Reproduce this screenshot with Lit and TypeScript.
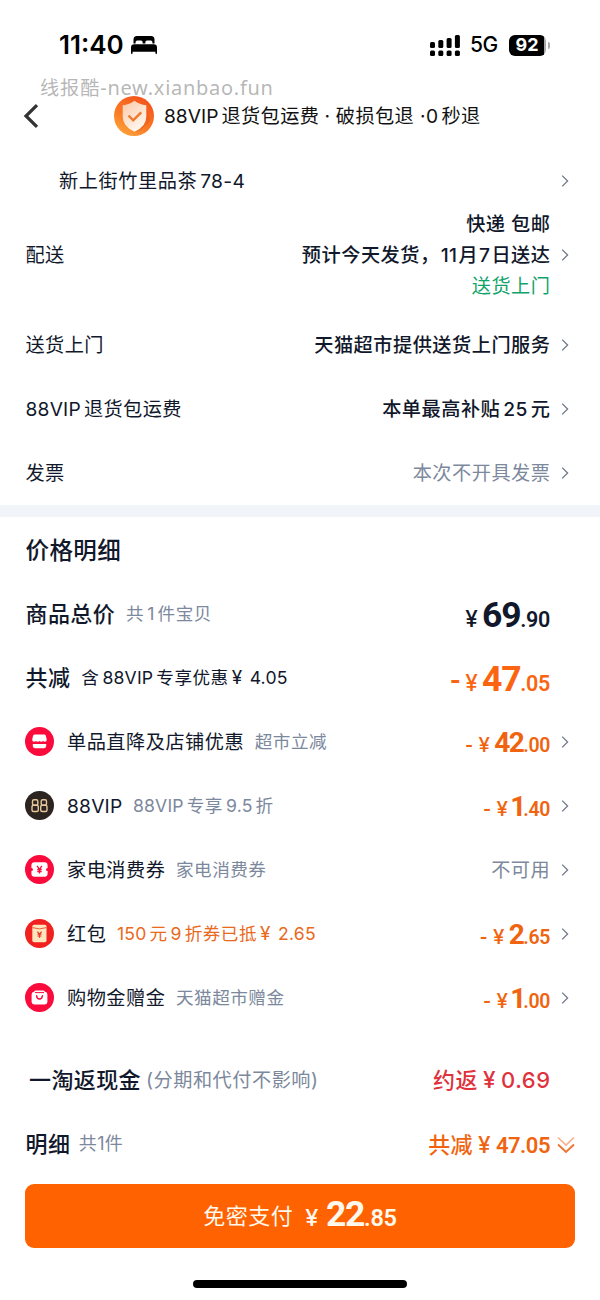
import { LitElement, html, css, svg, nothing } from "lit";
import { customElement, property } from "lit/decorators.js";

const RUNS = /([A-Za-z0-9][A-Za-z0-9.\-]*|¥ )/;

/* Wraps Latin runs so they get a little air next to Chinese characters. */
const mixed = (s: string) =>
  s.split(RUNS).map((part, i, all) =>
    i % 2
      ? part === "¥ "
        ? html`<span class="cur">¥</span>`
        : html`<span class="lat ${all[i - 1] ? "gl" : ""} ${all[i + 1] ? "gr" : ""}">${part}</span>`
      : part
  );

const chevron = html`<svg class="chev" width="8" height="14" viewBox="0 0 8 14">
  <path d="M1.2 1.6 L6.6 7 L1.2 12.4" fill="none" stroke="#6f7887" stroke-width="1.3" /></svg>`;

const icons: Record<string, unknown> = {
  shop: svg`<circle cx="14.5" cy="14.5" r="14.5" fill="#fb0a3c"/>
    <path d="M9.800 7.500h9.400q1.300 0 1.600 1.200l.9 3.600q.2 2.500-1.900 2.500-1.200 0-1.800-.8-.7.8-1.800.8t-1.700-.8q-.7.8-1.800.8t-1.800-.8q-.6.8-1.800.8-2.100 0-1.900-2.500l.9-3.600q.3-1.200 1.700-1.200z" fill="#fff"/>
    <path d="M7.800 16.900h13.400v2.200q0 2.100-2.100 2.100h-9.200q-2.100 0-2.100-2.100z" fill="#fff"/>`,
  vip: svg`<circle cx="14.5" cy="14.5" r="14.5" fill="#2b2420"/>
    <g fill="none" stroke="#e9c79c" stroke-width="1.400">
    <rect x="7.500" y="8.700" width="5.300" height="5.600" rx="1.500"/><rect x="7" y="14.300" width="6.300" height="6.200" rx="1.500"/>
    <rect x="16.200" y="8.700" width="5.300" height="5.600" rx="1.500"/><rect x="15.700" y="14.300" width="6.300" height="6.200" rx="1.500"/></g>`,
  coupon: svg`<circle cx="14.5" cy="14.5" r="14.5" fill="#fb0a3c"/>
    <path d="M9.600 7.300h9.800q3.200 0 3.200 3.200v2.400a1.600 1.600 0 0 0 0 3.200v2.400q0 3.200-3.200 3.200H9.600q-3.200 0-3.200-3.200v-2.400a1.600 1.600 0 0 0 0-3.200v-2.400q0-3.200 3.200-3.200z" fill="#fff"/>
    <path d="M12.100 10.900l2.400 3.400 2.400-3.400M14.500 14.300v4.300M12.300 14.500h4.400M12.300 16.500h4.400" fill="none" stroke="#fb0a3c" stroke-width="1.300"/>`,
  packet: svg`<circle cx="14.5" cy="14.5" r="14.5" fill="#f0211f"/>
    <rect x="7.300" y="5.800" width="14.200" height="17.400" rx="1.800" fill="#fde5bd"/>
    <path d="M7.300 8.600q7.100 2.600 14.200 0" fill="none" stroke="#ee5a3a" stroke-width="1"/>
    <path d="M12.400 12.600l2.100 2.500 2.100-2.500M14.500 15v3.800M12.500 15.100h4M12.500 17h4" fill="none" stroke="#e8392b" stroke-width="1.200"/>`,
  bag: svg`<circle cx="14.5" cy="14.5" r="14.5" fill="#fb0a3c"/>
    <path d="M11 7.400h7q1.600 0 1.900 1.300 2.500.3 2.500 2.700v7.200q0 3-3 3H9.600q-3 0-3-3v-7.200q0-2.400 2.500-2.700.3-1.300 1.900-1.300z" fill="#fff"/>
    <path d="M10 9.600h9" stroke="#fb0a3c" stroke-width="1"/>
    <path d="M11.600 12.700q.3 3.300 2.900 3.300t2.900-3.300" fill="none" stroke="#fb0a3c" stroke-width="1.400" stroke-linecap="round"/>`,
};

const base = css`
  .lat { letter-spacing: 0.200px; }
  .gl { margin-left: 3px; }
  .gr { margin-right: 3px; }
  .cur { font-size: 1.080em; margin: 0 7px 0 3px; line-height: 1; }
  .chev { display: block; flex: none; width: 8px; height: 14px; margin-top: -1px; }
`;

@customElement("pay-price")
export class PayPrice extends LitElement {
  @property() value = "0.00";
  @property({ type: Boolean }) minus = false;
  @property() size = "m";
  static styles = css`
    :host { display: block; font-family: Roboto, sans-serif; font-weight: 600; white-space: nowrap; }
    .p { display: flex; align-items: baseline; line-height: 40px; }
    .yen { font-family: Inter, sans-serif; font-weight: 500; }
    .m .dash { font-size: 21px; margin-right: 5px; }
    .m .yen { font-size: 20.500px; margin-right: 4px; }
    .m .int { font-size: 28px; letter-spacing: -1.500px; font-weight: 700; }
    .m .int.one { letter-spacing: -3px; margin-left: -2px; }
    .m .dec { font-size: 19.500px; letter-spacing: -0.400px; }
    .l .dash { font-size: 29px; margin-right: 4px; }
    .l .yen { font-size: 22.500px; margin-right: 4px; }
    .l .int { font-size: 35.500px; letter-spacing: -1.300px; font-weight: 700; }
    .l .dec { font-size: 21.500px; letter-spacing: -0.300px; }
    .xl .yen { font-size: 23.500px; margin-right: 7px; }
    .xl .int { font-size: 35.500px; letter-spacing: -1.300px; font-weight: 700; }
    .xl .dec { font-size: 23.500px; letter-spacing: -0.300px; }
  `;
  render() {
    const [int, dec] = this.value.split(".");
    return html`<div class="p ${this.size}">
      ${this.minus ? html`<span class="dash">-</span>` : nothing}
      <span class="yen">¥</span><span class="int ${int === "1" ? "one" : ""}">${int}</span><span class="dec">.${dec}</span>
    </div>`;
  }
}

@customElement("discount-row")
export class DiscountRow extends LitElement {
  @property() icon = "shop";
  @property() name = "";
  @property() note = "";
  @property() amount = "";
  @property({ type: Boolean }) hot = false;
  static styles = [base, css`
    :host { display: flex; height: 64px; align-items: center; padding: 0 31px 0 25px; }
    .ico { width: 29px; height: 29px; flex: none; margin: -1px 13px 0 0; }
    .name { font-size: 19.2px; letter-spacing: 0.500px; margin-right: 10.500px; }
    .note { font-size: 17.600px; letter-spacing: 0.500px; color: #7c889c; flex: 1; }
    .note.hot { color: #e9691d; }
    .none { font-size: 19.200px; letter-spacing: 0.400px; color: #7c889c; margin-right: 11px; }
    pay-price { color: #f0640f; margin: 5px 11px 0 0; }
  `];
  render() {
    return html`
      <svg class="ico" viewBox="0 0 29 29">${icons[this.icon]}</svg>
      <span class="name">${mixed(this.name)}</span>
      <span class="note ${this.hot ? "hot" : ""}">${mixed(this.note)}</span>
      ${this.amount
        ? html`<pay-price minus value=${this.amount}></pay-price>`
        : html`<span class="none">不可用</span>`}
      ${chevron}`;
  }
}

@customElement("app-root")
export class AppRoot extends LitElement {
  static styles = [base, css`
    :host {
      display: block; position: relative; width: 600px; height: 1300px; overflow: hidden;
      background: #fff; color: #11182b; white-space: nowrap; line-height: 1.3;
      font-family: Inter, "Noto Sans CJK SC", sans-serif; font-size: 19.200px; letter-spacing: 0.400px;
    }
    .status { display: flex; align-items: center; height: 78px; padding: 12px 50px 0 59px; box-sizing: border-box; color: #000; letter-spacing: 0; }
    .time { font-size: 26px; font-weight: 600; margin-right: 7px; width: 65px; }
    .grow { flex: 1; }
    .net { font-size: 21px; font-weight: 450; margin: 0 11px 0 10px; letter-spacing: -0.300px; }
    .batt { display: flex; align-items: center; justify-content: center; width: 37px; height: 21px; box-sizing: border-box; border-radius: 6px; background: linear-gradient(90deg, #000 35px, #aaa 35px); color: #fff; font-size: 18px; font-weight: 700; padding-right: 1px; }
    .nub { width: 2px; height: 7px; border-radius: 0 2px 2px 0; background: #aaa; margin-left: 2px; }
    .mark { position: absolute; left: 40px; top: 76px; font-family: "Noto Sans", "Noto Sans CJK SC", sans-serif; font-size: 19.200px; line-height: 24px; letter-spacing: 0.900px; color: rgba(140, 140, 140, 0.64); }
    .mark .lt { font-size: 20px; letter-spacing: 0.720px; }
    .head { display: flex; align-items: center; height: 76px; padding-left: 23px; color: #111; }
    .back { width: 16px; height: 26px; margin-right: 75px; }
    .shield { width: 40px; height: 40px; margin: -1px 10px 0 0; }
    .head .lat { letter-spacing: 0; margin-right: 3px; }
    .head .dot { margin: 0 -0.500px; }
    .head .zero { margin-right: 3px; }
    .addr { display: flex; align-items: center; justify-content: space-between; height: 54px; padding: 0 31px 0 59px; letter-spacing: 0.550px; }
    .addr .lat { letter-spacing: 0.350px; }
    .row { display: flex; align-items: center; height: 64px; padding: 0 31px 0 25.500px; }
    .row.ship { height: 94px; padding-bottom: 11px; }
    .val { flex: 1; text-align: right; margin-right: 10.500px; font-weight: 500; letter-spacing: 0.500px; }
    .val .lat { letter-spacing: 0.400px; }
    .val.lines { line-height: 30.700px; padding-top: 1px; }
    .lines .gl, .lines .gr { margin: 0 1px; }
    .green { color: #11a36b; font-weight: 400; }
    .mute { color: #7c889c; font-weight: 400; }
    .tight .gl, .tight .gr { margin-left: 0; margin-right: 0; }
    .band { height: 12px; background: #f1f5f9; }
    .title { height: 65px; padding: 3px 0 0 25.500px; box-sizing: border-box; display: flex; align-items: center; font-size: 23.500px; font-weight: 500; }
    .strong { font-size: 22px; font-weight: 500; letter-spacing: 0.400px; margin-right: 11px; }
    .small { font-size: 17.600px; letter-spacing: 0.500px; flex: 1; }
    .row pay-price { margin: 7px 19px 0 0; }
    .orange { color: #fb6410; }
    .rebate { margin-top: 18px; }
    .rebate .strong { margin: 0 5px 0 3.500px; }
    .paren { flex: 1; font-size: 19.200px; letter-spacing: 0.500px; color: #7c889c; padding-top: 1px; }
    .back-amt { color: #e0323c; font-size: 22px; font-weight: 500; margin-right: 18.500px; display: flex; align-items: baseline; letter-spacing: 0.500px; }
    .back-amt .y { font-size: 22.500px; margin: 0 5px 0 5px; }
    .total { color: #f0640f; font-size: 22px; font-weight: 500; display: flex; align-items: baseline; margin: 2px 7px 0 0; }
    .total .y { font-size: 22.500px; margin: 0 5px 0 5px; }
    .total .n { font-family: Roboto, sans-serif; font-weight: 600; font-size: 22px; letter-spacing: -0.500px; }
    .detail { padding-right: 25px; }
    .detail .strong { margin-right: 8.500px; }
    .detail .small { font-size: 18px; }
    .dbl { width: 18px; height: 18px; margin-top: 1px; }
    .pay { display: flex; align-items: center; justify-content: center; height: 64px; margin: 8px 25px 0; border-radius: 9px; background: #ff6200; color: #fff8ec; font-size: 22px; font-weight: 400; letter-spacing: 0.500px; }
    .pay pay-price { margin: 0 0 0 12px; }
    .home { width: 214px; height: 8px; border-radius: 4px; background: #000; margin: 32px auto 0; }
  `];

  render() {
    return html`
      <div class="status">
        <span class="time">11:40</span>
        <svg width="26" height="18" viewBox="0 0 26 18">
          <path d="M2.500 7.500V3.500Q2.500 0 6 0H20Q23.500 0 23.500 3.500V7.500H21.400V6Q21.400 4.400 19.800 4.400H16Q14.400 4.400 14.400 6V7.500H11.600V6Q11.600 4.400 10 4.400H6.200Q4.600 4.400 4.600 6V7.500Z"/>
          <path d="M0 11.500Q0 8.200 3.300 8.200H22.700Q26 8.200 26 11.500V17.200Q26 18 25.200 18T24.400 17.200V15.800H1.600V17.200Q1.600 18 .8 18T0 17.200Z"/>
        </svg>
        <span class="grow"></span>
        <svg width="30" height="21" viewBox="0 0 30 21">
          <rect x="0" y="7" width="5" height="6" rx="1.500"/><rect x="8.300" y="5" width="5" height="8" rx="1.500"/>
          <rect x="16.600" y="3" width="5" height="10" rx="1.500"/><rect x="24.900" y="0" width="5" height="13" rx="1.500"/>
          <rect x="0" y="15.500" width="5" height="5.500" rx="1.500"/><rect x="8.300" y="15.500" width="5" height="5.500" rx="1.500"/>
          <rect x="16.600" y="15.500" width="5" height="5.500" rx="1.500"/><rect x="24.900" y="15.500" width="5" height="5.500" rx="1.500"/>
        </svg>
        <span class="net">5G</span>
        <span class="batt">92</span><span class="nub"></span>
      </div>

      <div class="head">
        <svg class="back" viewBox="0 0 16 26"><path d="M14 2.200 L3 13 L14 23.800" fill="none" stroke="#333" stroke-width="3.200"/></svg>
        <svg class="shield" viewBox="0 0 40 40">
          <defs>
            <linearGradient id="o" x1="0.800" y1="0" x2="0.200" y2="1"><stop offset="0" stop-color="#f4501a"/><stop offset="0.600" stop-color="#fb7a25"/><stop offset="1" stop-color="#fda63c"/></linearGradient>
            <linearGradient id="s" x1="0" y1="0" x2="0.600" y2="1"><stop offset="0" stop-color="#fbc9a6"/><stop offset="1" stop-color="#fff7ef"/></linearGradient>
          </defs>
          <circle cx="20" cy="20" r="20" fill="url(#o)"/>
          <path d="M27 34.500L36 25L32 11L20 36z" fill="#d9480f" opacity="0.250"/>
          <path d="M20.500 4.800Q25.500 8.600 32.300 9.300V20.500Q32.300 30.500 20.500 35.800Q8.700 30.500 8.700 20.500V9.300Q15.500 8.600 20.500 4.800Z" fill="url(#s)"/>
          <path d="M14.500 19.500L19.200 24.300L27.200 16.300" fill="none" stroke="#ef7a2d" stroke-width="2.500"/>
        </svg>
        <span><span class="lat">88VIP</span>退货包运费<span class="dot"> · </span>破损包退 ·<span class="zero">0</span>秒退</span>
      </div>
      <div class="mark">线报酷<span class="lt">-new.xianbao.fun</span></div>

      <div class="addr"><span>${mixed("新上街竹里品茶78-4")}</span>${chevron}</div>

      <div class="row ship">
        <span>配送</span>
        <div class="val lines">
          <div>快递 包邮</div>
          <div>${mixed("预计今天发货，11月7日送达")}</div>
          <div class="green">送货上门</div>
        </div>
        ${chevron}
      </div>
      <div class="row"><span>送货上门</span><span class="val">天猫超市提供送货上门服务</span>${chevron}</div>
      <div class="row"><span>${mixed("88VIP退货包运费")}</span><span class="val">${mixed("本单最高补贴25元")}</span>${chevron}</div>
      <div class="row"><span>发票</span><span class="val mute">本次不开具发票</span>${chevron}</div>

      <div class="band"></div>
      <div class="title">价格明细</div>
      <div class="row"><span class="strong">商品总价</span><span class="small mute">${mixed("共1件宝贝")}</span><pay-price size="l" value="69.90"></pay-price></div>
      <div class="row"><span class="strong">共减</span><span class="small">${mixed("含88VIP专享优惠¥ 4.05")}</span><pay-price class="orange" size="l" minus value="47.05"></pay-price></div>

      <discount-row icon="shop" name="单品直降及店铺优惠" note="超市立减" amount="42.00"></discount-row>
      <discount-row icon="vip" name="88VIP" note="88VIP专享9.5折" amount="1.40"></discount-row>
      <discount-row icon="coupon" name="家电消费券" note="家电消费券"></discount-row>
      <discount-row icon="packet" name="红包" note="150元9折券已抵¥ 2.65" hot amount="2.65"></discount-row>
      <discount-row icon="bag" name="购物金赠金" note="天猫超市赠金" amount="1.00"></discount-row>

      <div class="row rebate">
        <span class="strong">一淘返现金</span><span class="paren">(分期和代付不影响)</span>
        <span class="back-amt"><span>约返</span><span class="y">¥</span><span>0.69</span></span>
      </div>
      <div class="row detail">
        <span class="strong">明细</span><span class="small mute tight">${mixed("共1件")}</span>
        <span class="total"><span>共减</span><span class="y">¥</span><span class="n">47.05</span></span>
        <svg class="dbl" viewBox="0 0 18 18"><path d="M1 1.500L9 9L17 1.500" fill="none" stroke="#f6b28c" stroke-width="1.700"/><path d="M1 8.500L9 16L17 8.500" fill="none" stroke="#ee7431" stroke-width="1.900"/></svg>
      </div>

      <div class="pay"><span>免密支付</span><pay-price size="xl" value="22.85"></pay-price></div>
      <div class="home"></div>
    `;
  }
}
